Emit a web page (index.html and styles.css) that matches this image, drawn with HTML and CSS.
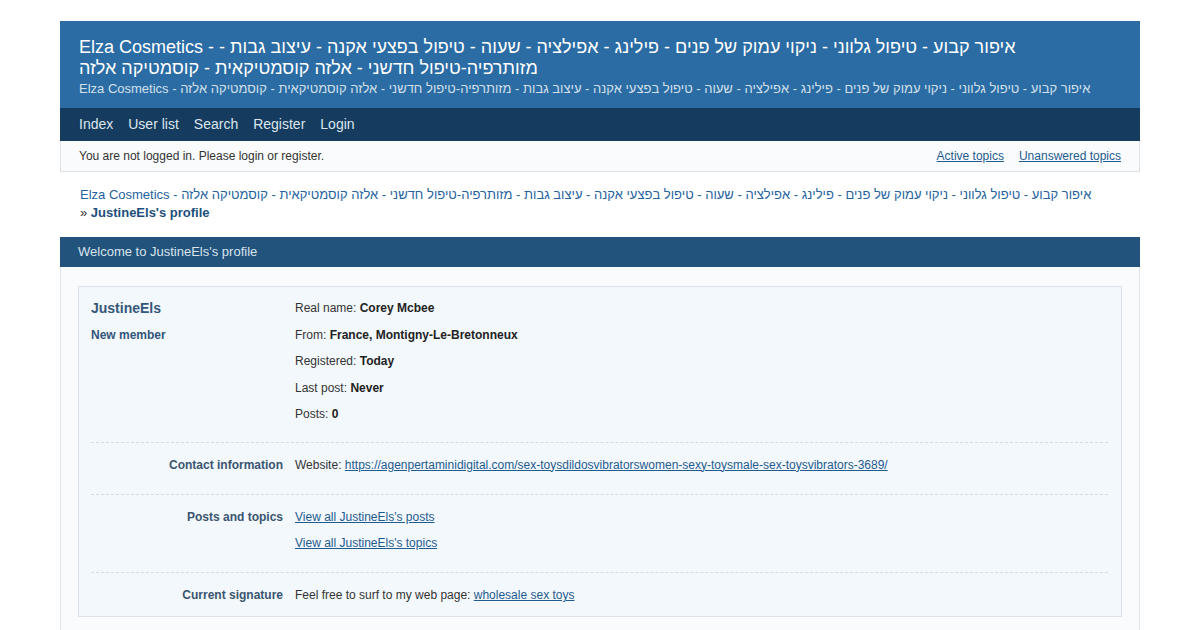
FILE: index.html
```html
<!DOCTYPE html>
<html lang="en">
<head>
<meta charset="utf-8">
<title>JustineEls's profile</title>
<link rel="stylesheet" href="styles.css">
</head>
<body>
<div class="wrap">
  <header class="brd-head">
    <h1 class="brd-title">Elza Cosmetics - איפור קבוע - טיפול גלווני - ניקוי עמוק של פנים - פילינג - אפילציה - שעוה - טיפול בפצעי אקנה - עיצוב גבות - מזותרפיה-טיפול חדשני - אלזה קוסמטיקאית - קוסמטיקה אלזה</h1>
    <p class="brd-desc">Elza Cosmetics - איפור קבוע - טיפול גלווני - ניקוי עמוק של פנים - פילינג - אפילציה - שעוה - טיפול בפצעי אקנה - עיצוב גבות - מזותרפיה-טיפול חדשני - אלזה קוסמטיקאית - קוסמטיקה אלזה</p>
  </header>
  <nav class="brd-menu">
    <a href="#">Index</a>
    <a href="#">User list</a>
    <a href="#">Search</a>
    <a href="#">Register</a>
    <a href="#">Login</a>
  </nav>
  <div class="status">
    <span>You are not logged in. Please login or register.</span>
    <span class="status-links"><a href="#">Active topics</a><a href="#">Unanswered topics</a></span>
  </div>
  <div class="crumbs"><a href="#">Elza Cosmetics - איפור קבוע - טיפול גלווני - ניקוי עמוק של פנים - פילינג - אפילציה - שעוה - טיפול בפצעי אקנה - עיצוב גבות - מזותרפיה-טיפול חדשני - אלזה קוסמטיקאית - קוסמטיקה אלזה</a> <span class="crumb-cur">»&nbsp;<strong>JustineEls's profile</strong></span></div>
  <div class="block-head">Welcome to JustineEls's profile</div>
  <div class="block-box">
    <div class="inbox">
      <div class="sect first">
        <div class="who">
          <div class="uname">JustineEls</div>
          <div class="utitle">New member</div>
        </div>
        <div class="vals">
          <div class="line">Real name: <strong>Corey Mcbee</strong></div>
          <div class="line">From: <strong>France, Montigny-Le-Bretonneux</strong></div>
          <div class="line">Registered: <strong>Today</strong></div>
          <div class="line">Last post: <strong>Never</strong></div>
          <div class="line">Posts: <strong>0</strong></div>
        </div>
      </div>
      <div class="sect">
        <div class="lbl">Contact information</div>
        <div class="vals">
          <div class="line">Website: <a href="#">https://agenpertaminidigital.com/sex-toysdildosvibratorswomen-sexy-toysmale-sex-toysvibrators-3689/</a></div>
        </div>
      </div>
      <div class="sect">
        <div class="lbl">Posts and topics</div>
        <div class="vals">
          <div class="line"><a href="#">View all JustineEls's posts</a></div>
          <div class="line"><a href="#">View all JustineEls's topics</a></div>
        </div>
      </div>
      <div class="sect last">
        <div class="lbl">Current signature</div>
        <div class="vals">
          <div class="line">Feel free to surf to my web page: <a href="#">wholesale sex toys</a></div>
        </div>
      </div>
    </div>
  </div>
</div>
</body>
</html>
```
FILE: styles.css
```css
html, body {
  margin: 0;
  padding: 0;
  background: #ffffff;
  font-family: "Liberation Sans", Arial, sans-serif;
  color: #333333;
}
.wrap {
  width: 1080px;
  margin: 21px 60px 0;
}
.brd-head {
  background: #2b6ca4;
  padding: 16px 19px 11px;
}
.brd-title {
  margin: 0;
  font-size: 18px;
  line-height: 21px;
  font-weight: normal;
  color: #ffffff;
}
.brd-desc {
  margin: 2px 0 0;
  font-size: 13px;
  line-height: 16px;
  color: #d3e0ec;
}
.brd-menu {
  background: #153c5e;
  height: 33px;
  display: flex;
  align-items: center;
  gap: 15px;
  padding: 0 19px 1px;
  box-sizing: border-box;
}
.brd-menu a {
  color: #dde6ee;
  text-decoration: none;
  font-size: 14px;
}
.status {
  height: 31px;
  box-sizing: border-box;
  display: flex;
  align-items: center;
  justify-content: space-between;
  padding: 0 18px 0 18px;
  background: #f9fbfc;
  border: 1px solid #dde2e7;
  border-top: none;
  font-size: 12px;
  color: #333;
}
.status-links {
  display: flex;
  gap: 15px;
}
.status-links a,
.crumbs a,
.vals a {
  color: #1f5b8f;
}
.crumbs {
  padding: 5px 20px 0 20px;
  margin-top: 9px;
  font-size: 13px;
  line-height: 18px;
  height: 56px;
  box-sizing: border-box;
}
.crumbs a {
  text-decoration: none;
  color: #2563a0;
}
.crumb-cur {
  white-space: nowrap;
}
.crumb-cur strong {
  color: #1d4f7c;
}
.block-head {
  background: #22537c;
  color: #d8e3ec;
  font-size: 13px;
  height: 30px;
  line-height: 29px;
  padding: 0 18px;
}
.block-box {
  background: #fafbfc;
  border: 1px solid #e2e6ea;
  border-top: none;
  padding: 19px 17px 18px;
}
.inbox {
  background: #f3f8fc;
  border: 1px solid #dbe2e9;
  padding: 0 13px 0 12px;
}
.sect {
  display: grid;
  grid-template-columns: 192px 1fr;
  column-gap: 12px;
  padding: 9px 0 15.5px;
  border-bottom: 1px dashed #d3dce4;
  font-size: 12px;
}
.sect.first {
  padding-top: 8px;
  padding-bottom: 14px;
}
.sect.last {
  border-bottom: none;
  padding-bottom: 7px;
}
.line {
  line-height: 26.5px;
}
.line strong {
  color: #222;
}
.who {
  line-height: 26.5px;
}
.uname {
  font-size: 14px;
  font-weight: bold;
  color: #34577a;
}
.utitle {
  font-size: 12px;
  font-weight: bold;
  color: #34577a;
}
.lbl {
  text-align: right;
  font-weight: bold;
  color: #3a5570;
  line-height: 26.5px;
}
```
